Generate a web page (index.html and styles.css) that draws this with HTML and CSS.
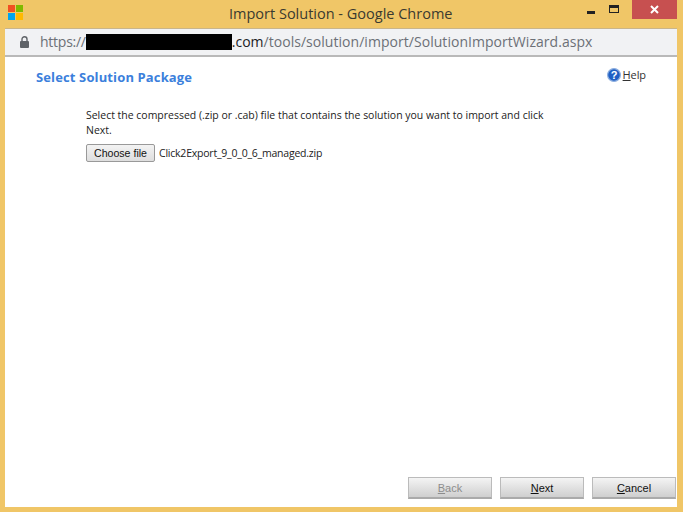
FILE: index.html
```html
<!DOCTYPE html>
<html lang="en">
<head>
<meta charset="utf-8">
<title>Import Solution - Google Chrome</title>
<link rel="stylesheet" href="styles.css">
</head>
<body>
<div class="window">
  <header class="titlebar">
    <svg class="logo" width="15" height="15" viewBox="0 0 15 15"><rect width="7" height="7" fill="#f25022"/><rect x="8" width="7" height="7" fill="#7fba00"/><rect y="8" width="7" height="7" fill="#00a4ef"/><rect x="8" y="8" width="7" height="7" fill="#ffb900"/></svg>
    <div class="title">Import Solution - Google Chrome</div>
    <div class="controls">
      <span class="min"></span>
      <span class="max"></span>
      <span class="close"><svg width="9" height="9" viewBox="0 0 9 9"><path d="M1 1l7 7M8 1l-7 7" stroke="#fff" stroke-width="2"/></svg></span>
    </div>
  </header>
  <div class="client">
    <div class="urlbar">
      <svg class="lock" width="9" height="12" viewBox="0 0 9 12"><path d="M2 5V3.2a2.5 2.5 0 0 1 5 0V5" fill="none" stroke="#5f6368" stroke-width="1.4"/><rect y="5" width="9" height="7" rx="1" fill="#5f6368"/></svg>
      <span class="scheme">https://</span><span class="redact"></span><span class="domain">.com</span><span class="path">/tools/solution/import/SolutionImportWizard.aspx</span>
    </div>
    <main class="content">
      <div class="heading-row">
        <h1 class="heading">Select Solution Package</h1>
        <a class="help"><svg width="14" height="14" viewBox="0 0 14 14"><circle cx="7" cy="7" r="6.4" fill="#1f5fc4" stroke="#8fb0e0" stroke-width="1.2"/><text x="7" y="10.5" class="qmark" text-anchor="middle">?</text></svg><span class="help-text"><u>H</u>elp</span></a>
      </div>
      <div class="form">
        <p class="instr">Select the compressed (.zip or .cab) file that contains the solution you want to import and click Next.</p>
        <div class="file-row">
          <button class="choose">Choose file</button>
          <span class="filename">Click2Export_9_0_0_6_managed.zip</span>
        </div>
      </div>
    </main>
    <footer class="footer">
      <button class="btn disabled"><u>B</u>ack</button>
      <button class="btn"><u>N</u>ext</button>
      <button class="btn"><u>C</u>ancel</button>
    </footer>
  </div>
</div>
</body>
</html>
```
FILE: styles.css
```css
* { box-sizing: border-box; }
html, body { margin: 0; height: 100%; }
body { background: #f0c667; overflow: hidden; }
.window { height: 512px; display: flex; flex-direction: column; padding: 0 6px 5px 5px; }
.titlebar { height: 28px; flex: none; display: flex; align-items: flex-start; position: relative; }
.logo { margin: 5px 0 0 3px; }
.title { position: absolute; left: 224px; top: 4px; font: 14.5px/20px "Open Sans", sans-serif; color: #3a3a30; white-space: nowrap; }
.controls { margin-left: auto; display: flex; align-items: flex-start; }
.min { width: 8px; height: 3px; background: #222; margin: 11px 14px 0 0; }
.max { width: 10px; height: 8px; border: 1px solid #222; border-top-width: 3px; margin: 5px 13px 0 0; }
.close { width: 45px; height: 19px; background: #c75050; display: flex; align-items: center; justify-content: center; }
.client { flex: 1; display: flex; flex-direction: column; background: #fff; border-top: 1px solid #c9b58a; }
.urlbar { height: 28px; flex: none; background: #f1f2f4; border-bottom: 2px solid #b9b9b9; display: flex; align-items: center; font: 14px/20px "Open Sans", sans-serif; padding-left: 15px; white-space: nowrap; }
.lock { margin-right: 11px; }
.scheme { color: #6c7077; letter-spacing: -0.25px; }
.path { color: #6c7077; letter-spacing: 0.04px; }
.domain { color: #202124; }
.redact { width: 146px; height: 16px; background: #000; }
.content { flex: 1; padding: 0 31px; }
.heading-row { display: flex; justify-content: space-between; margin-top: 10px; }
.heading { margin: 0; font: bold 13px/20px "Open Sans", sans-serif; color: #3b7fdc; letter-spacing: 0.13px; }
.help { display: flex; align-items: center; gap: 2px; font: 11px/14px "Open Sans", sans-serif; color: #333; height: 14px; margin-top: 1px; letter-spacing: -0.1px; }
.qmark { font: bold 11px "Liberation Sans", sans-serif; fill: #fff; }
.form { margin: 21px 0 0 50px; width: 470px; }
.instr { margin: 0; font: 10.47px/15px "Open Sans", sans-serif; color: #222; }
.file-row { display: flex; align-items: center; gap: 4px; margin-top: 6px; }
.choose { width: 69px; height: 18px; padding: 0; font: 10.6px "Liberation Sans", sans-serif; color: #111; background: linear-gradient(#f3f3f3, #dedede); border: 1px solid #999; border-radius: 2px; }
.filename { font: 10.5px/15px "Open Sans", sans-serif; color: #222; letter-spacing: -0.22px; }
.footer { flex: none; display: flex; justify-content: flex-end; gap: 8px; padding: 0 1px 8px 0; }
.btn { width: 84px; height: 22px; padding: 0; font: 11px "Liberation Sans", sans-serif; color: #111; background: linear-gradient(#f4f4f4, #cfcfcf); border: 1px solid #bbb; border-bottom: 2px solid #aaa; }
.disabled { color: #8d8d8d; }
```
